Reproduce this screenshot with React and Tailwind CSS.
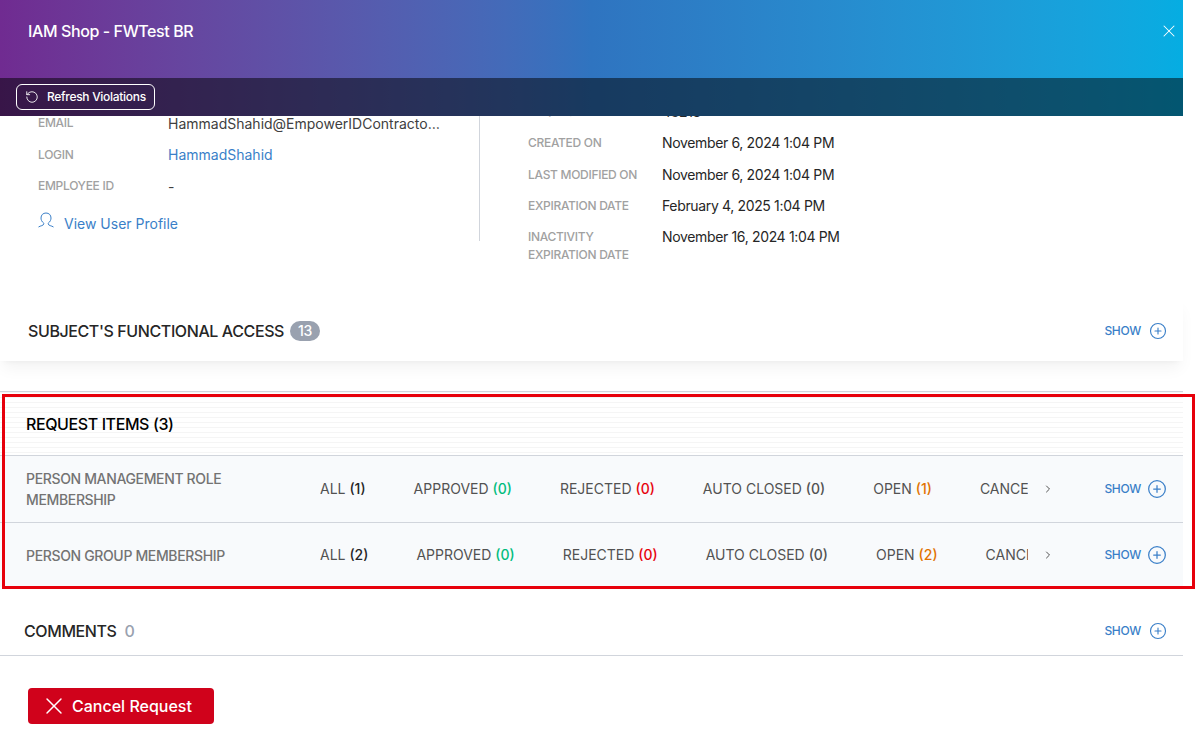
import React from "react";
import { CirclePlus, RotateCcw, X, ChevronRight } from "lucide-react";

const userRows = [
  { label: "EMAIL", value: "HammadShahid@EmpowerIDContractors.onmicrosoft.com" },
  { label: "LOGIN", value: "HammadShahid", link: true },
  { label: "EMPLOYEE ID", value: "-" },
];

const dateRows = [
  { label: "REQUEST ID", value: "48213" },
  { label: "CREATED ON", value: "November 6, 2024 1:04 PM" },
  { label: "LAST MODIFIED ON", value: "November 6, 2024 1:04 PM" },
  { label: "EXPIRATION DATE", value: "February 4, 2025 1:04 PM" },
  { label: "INACTIVITY EXPIRATION DATE", value: "November 16, 2024 1:04 PM" },
];

const requestItems = [
  { name: "PERSON MANAGEMENT ROLE MEMBERSHIP", all: 1, open: 1 },
  { name: "PERSON GROUP MEMBERSHIP", all: 2, open: 2 },
];

function Show({ large }) {
  return (
    <button className={`flex items-center text-xs font-medium tracking-tight text-[#3a7fc8] ${large ? "gap-1.5" : "gap-2"}`}>
      SHOW
      <CirclePlus className={large ? "size-5" : "size-4.5"} strokeWidth={1.5} />
    </button>
  );
}

function Tab({ label, count, color }) {
  return (
    <span className="shrink-0 text-sm text-neutral-600">
      {label} <span className={`font-medium ${color}`}>({count})</span>
    </span>
  );
}

export default function App() {
  return (
    <div className="h-[733px] w-full overflow-hidden bg-white font-['Inter',sans-serif] text-neutral-800">
      <div className="w-[1183px]">
        <header className="relative z-10 bg-linear-to-r from-[#702b91] via-[#2f74c0] to-[#05ade2]">
          <div className="flex h-[78px] items-center justify-between pb-4 pl-7 pr-1">
            <h1 className="font-medium tracking-tight text-white">IAM Shop - FWTest BR</h1>
            <X className="size-5 text-white" strokeWidth={1.25} />
          </div>
          <div className="flex h-[38px] items-center bg-black/50 px-4">
            <button className="flex items-center gap-2 rounded-md border border-white px-2 py-1 text-xs font-medium tracking-tight text-white">
              <RotateCcw className="size-3.5" strokeWidth={1.5} />
              Refresh Violations
            </button>
          </div>
        </header>

        <section className="flex items-start">
          <div className="-mt-0.5 flex w-120 flex-col gap-3 border-r border-gray-300 pb-2 pl-9.5 pr-9">
            {userRows.map((r) => (
              <div key={r.label} className="flex items-center">
                <span className="mr-0.5 w-32 shrink-0 text-xs font-medium leading-snug tracking-tight text-neutral-400">{r.label}</span>
                <span className={`truncate text-sm leading-snug ${r.link ? "text-[#3a7fc8]" : "text-neutral-700"}`}>{r.value}</span>
              </div>
            ))}
            <a className="mt-1.5 flex items-center gap-2.5 text-sm leading-snug text-[#3a7fc8]">
              <svg viewBox="0 0 16 15" className="-mt-1.5 h-4 w-4" fill="none" stroke="currentColor">
                <path d="M.5 14.5c2-1.5 5-1 5.5-3.5C3.5 9 3 7 3 5.5 3 2.5 5 .5 8 .5s5 2 5 5c0 1.5-.5 3.5-3 5.5.5 2.5 3.5 2 5.5 3.5" />
              </svg>
              View User Profile
            </a>
          </div>
          <div className="-mt-3.5 flex flex-col gap-3 pb-px pl-12">
            {dateRows.map((r) => (
              <div key={r.label} className="flex items-start">
                <span className="mr-1.5 mt-px w-32 shrink-0 text-xs font-medium leading-normal tracking-tight text-neutral-400">{r.label}</span>
                <span className="text-sm leading-snug tracking-tight text-neutral-800">{r.value}</span>
              </div>
            ))}
          </div>
        </section>

        <section className="mt-8 flex h-16 items-center justify-between pl-7 pr-4 pt-1 shadow-lg shadow-black/5">
          <h2 className="flex items-center gap-1.5 font-medium tracking-tight">
            SUBJECT'S FUNCTIONAL ACCESS
            <span className="rounded-full bg-gray-400 px-2 text-sm font-medium leading-snug text-white">13</span>
          </h2>
          <Show />
        </section>

        <div className="mt-7.5 border-t border-gray-300" />

        <section className="relative">
          <div className="flex h-16 items-center border-b border-gray-300 bg-[repeating-linear-gradient(to_bottom,#f5f5f5_0,#f5f5f5_1px,#ffffff_1px,#ffffff_5px)] px-6.5">
            <h2 className="font-medium tracking-tight text-black">REQUEST ITEMS (3)</h2>
          </div>
          {requestItems.map((item, i) => (
            <div key={item.name} className={`flex min-h-16 items-center bg-slate-50 py-3 pl-6.5 pr-4 ${i === 0 ? "border-b border-gray-300" : ""}`}>
              <span className="mr-1.5 w-72 shrink-0 text-sm font-medium leading-normal tracking-tight text-neutral-500">{item.name}</span>
              <div className="flex w-177 gap-12 overflow-hidden">
                <Tab label="ALL" count={item.all} color="text-neutral-800" />
                <Tab label="APPROVED" count={0} color="text-emerald-500" />
                <Tab label="REJECTED" count={0} color="text-red-600" />
                <Tab label="AUTO CLOSED" count={0} color="text-neutral-600" />
                <Tab label="OPEN" count={item.open} color="text-amber-600" />
                <Tab label="CANCELLED" count={0} color="text-neutral-600" />
              </div>
              <ChevronRight className="ml-3.5 size-3 text-neutral-600" />
              <div className="ml-auto">
                <Show large />
              </div>
            </div>
          ))}
          {/* annotation box drawn over the section */}
          <div className="absolute -bottom-0.5 -right-3 left-0.5 top-0.5 border-3 border-red-600" />
        </section>

        <section className="mt-8 flex items-center justify-between border-b border-gray-300 pb-3 pl-6 pr-4">
          <h2 className="flex items-center gap-2 font-medium tracking-tight">
            COMMENTS <span className="text-gray-400">0</span>
          </h2>
          <Show />
        </section>

        <button className="ml-7 mt-8 flex h-9 items-center gap-1 rounded bg-[#d0021b] pl-3 pr-5.5 font-medium text-white">
          <X className="size-7" strokeWidth={1.25} />
          Cancel Request
        </button>
      </div>
    </div>
  );
}
